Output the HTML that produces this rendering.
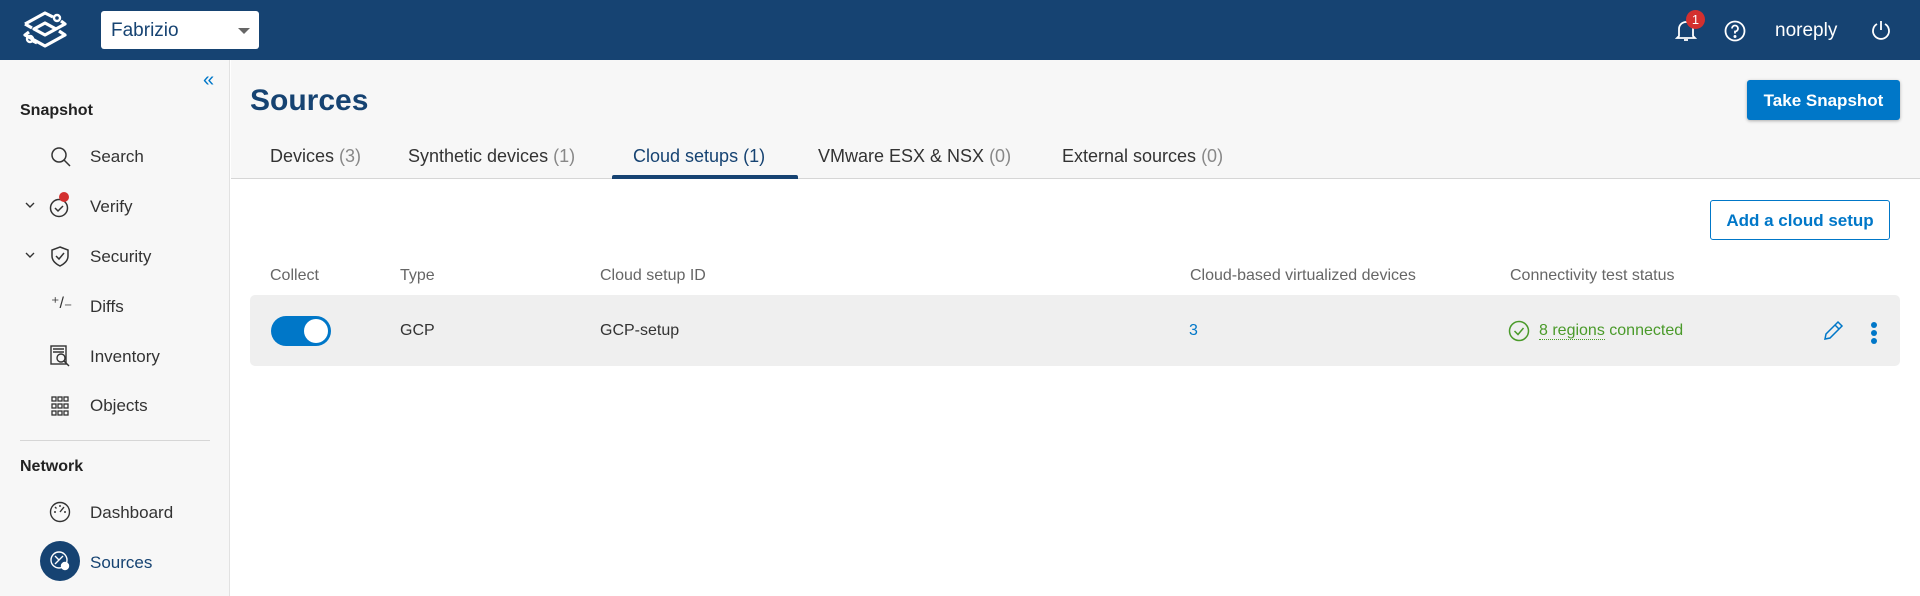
<!DOCTYPE html>
<html><head><meta charset="utf-8"><style>
*{box-sizing:border-box;margin:0;padding:0}
body{width:1920px;height:596px;overflow:hidden;font-family:"Liberation Sans",Arial,sans-serif;background:#fff;position:relative;color:#222}
.a{position:absolute;white-space:nowrap}
.hdr{left:0;top:0;width:1920px;height:60px;background:#164372}
.side{left:0;top:60px;width:230px;height:536px;background:#f7f7f7;border-right:1px solid #e2e2e2}
.top{left:231px;top:60px;width:1689px;height:119px;background:#f7f7f7;border-bottom:1px solid #d6d6d6}
.nav{font-size:17px;color:#333;left:90px}
.sec{font-size:16px;font-weight:bold;color:#222;left:20px}
.tab{font-size:18px;color:#333;top:146px}
.tab span{color:#888}
.th{font-size:16px;color:#666;top:267px}
.td{font-size:16px;color:#333;top:322px}
</style></head><body>
<div class="a hdr"></div>
<svg class="a" style="left:20px;top:10px" width="50" height="40" viewBox="0 0 50 40" fill="none" stroke="#fff" stroke-width="3.2" stroke-linejoin="round">
<path d="M5 14 L25 3 L33 7"/><path d="M41 11 L45 14 L25 25 L14 19 L25 13 L36 19"/>
<path d="M5 14 L12 18"/>
<path d="M9 22 L5 25 L25 36 L45 25 L39 21"/><path d="M17 33 L11 30"/>
<circle cx="37" cy="8" r="3" stroke-width="2.4"/><circle cx="10" cy="29" r="3" stroke-width="2.4"/></svg>
<div class="a" style="left:101px;top:11px;width:158px;height:38px;background:#fff;border-radius:3px"></div>
<div class="a" style="left:111px;top:20px;font-size:19px;color:#164372">Fabrizio</div>
<div class="a" style="left:238px;top:28px;width:0;height:0;border-left:6px solid transparent;border-right:6px solid transparent;border-top:6px solid #666"></div>
<!-- header right -->
<svg class="a" style="left:1675px;top:19px" width="22" height="24" viewBox="0 0 22 24" fill="none" stroke="#fff" stroke-width="1.8"><path d="M4 17 V10 A7 7 0 0 1 18 10 V17 L20 19 H2 Z"/><path d="M9 21 H13"/></svg>
<div class="a" style="left:1686px;top:10px;width:19px;height:19px;border-radius:50%;background:#d3302f;color:#fff;font-size:13px;text-align:center;line-height:19px">1</div>
<svg class="a" style="left:1724px;top:20px" width="22" height="22" viewBox="0 0 22 22" fill="none" stroke="#fff" stroke-width="1.8"><circle cx="11" cy="11" r="9.5"/><path d="M8 8.5 A3 3 0 1 1 11 11.5 V13.5"/><circle cx="11" cy="16.5" r=".6" fill="#fff"/></svg>
<div class="a" style="left:1775px;top:20px;font-size:19px;color:#fff">noreply</div>
<svg class="a" style="left:1870px;top:19px" width="22" height="22" viewBox="0 0 22 22" fill="none" stroke="#fff" stroke-width="1.8"><path d="M7 5 A8 8 0 1 0 15 5"/><path d="M11 2 V11"/></svg>
<!-- sidebar -->
<div class="a side"></div>
<div class="a" style="left:203px;top:69px;font-size:20px;color:#0077c8">«</div>
<div class="a sec" style="top:102px">Snapshot</div>
<svg class="a" style="left:50px;top:146px" width="22" height="22" viewBox="0 0 22 22" fill="none" stroke="#333" stroke-width="1.5"><circle cx="9" cy="9" r="7"/><path d="M14 14 L20 20"/></svg>
<div class="a nav" style="top:147px">Search</div>
<svg class="a" style="left:25px;top:202px" width="10" height="6" viewBox="0 0 10 6" fill="none" stroke="#333" stroke-width="1.4"><path d="M1 1 L5 5 L9 1"/></svg>
<svg class="a" style="left:49px;top:196px" width="24" height="22" viewBox="0 0 24 22" fill="none" stroke="#333" stroke-width="1.5"><circle cx="10" cy="12" r="8.5"/><path d="M6 12 L9 15 L14 10"/></svg>
<div class="a" style="left:59px;top:192px;width:10px;height:10px;border-radius:50%;background:#d3302f"></div>
<div class="a nav" style="top:197px">Verify</div>
<svg class="a" style="left:25px;top:252px" width="10" height="6" viewBox="0 0 10 6" fill="none" stroke="#333" stroke-width="1.4"><path d="M1 1 L5 5 L9 1"/></svg>
<svg class="a" style="left:50px;top:245px" width="20" height="22" viewBox="0 0 20 22" fill="none" stroke="#333" stroke-width="1.5"><path d="M10 2 L18 5 V11 C18 16 14 19 10 21 C6 19 2 16 2 11 V5 Z"/><path d="M6 11 L9 14 L14 8"/></svg>
<div class="a nav" style="top:247px">Security</div>
<div class="a" style="left:51px;top:293px;font-size:16px;color:#333">⁺/₋</div>
<div class="a nav" style="top:297px">Diffs</div>
<svg class="a" style="left:50px;top:345px" width="22" height="22" viewBox="0 0 22 22" fill="none" stroke="#333" stroke-width="1.4"><rect x="1" y="1" width="15" height="18"/><path d="M3 4 H14 M3 7 H14"/><circle cx="11" cy="13" r="4"/><path d="M14 16 L19 21"/></svg>
<div class="a nav" style="top:347px">Inventory</div>
<svg class="a" style="left:51px;top:396px" width="18" height="20" viewBox="0 0 18 20" fill="none" stroke="#333" stroke-width="1.3"><g><rect x="1" y="1" width="4" height="4"/><rect x="7" y="1" width="4" height="4"/><rect x="13" y="1" width="4" height="4"/><rect x="1" y="8" width="4" height="4"/><rect x="7" y="8" width="4" height="4"/><rect x="13" y="8" width="4" height="4"/><rect x="1" y="15" width="4" height="4"/><rect x="7" y="15" width="4" height="4"/><rect x="13" y="15" width="4" height="4"/></g></svg>
<div class="a nav" style="top:396px">Objects</div>
<div class="a" style="left:20px;top:440px;width:190px;height:1px;background:#d6d6d6"></div>
<div class="a sec" style="top:458px">Network</div>
<svg class="a" style="left:49px;top:501px" width="22" height="22" viewBox="0 0 22 22" fill="none" stroke="#333" stroke-width="1.4"><circle cx="11" cy="11" r="9.5"/><path d="M11 11 L15 6"/><path d="M5 11 H7 M15 11 H17 M11 4 V6 M6 6 L7.5 7.5"/></svg>
<div class="a nav" style="top:503px">Dashboard</div>
<div class="a" style="left:40px;top:541px;width:40px;height:40px;border-radius:50%;background:#164372"></div>
<svg class="a" style="left:49px;top:550px" width="22" height="22" viewBox="0 0 22 22" fill="none" stroke="#fff" stroke-width="1.4"><circle cx="10" cy="10" r="8"/><path d="M6 6 L10 10 L14 6 M6 14 L10 10"/><circle cx="16" cy="16" r="3.5" fill="#fff"/></svg>
<div class="a nav" style="top:553px;color:#164372">Sources</div>
<!-- top area -->
<div class="a top"></div>
<div class="a" style="left:250px;top:84px;font-size:30px;font-weight:bold;color:#164372">Sources</div>
<div class="a" style="left:1747px;top:80px;width:153px;height:40px;background:#0077c8;border-radius:3px;box-shadow:0 1px 3px rgba(0,0,0,.3);color:#fff;font-size:17px;font-weight:bold;text-align:center;line-height:41px">Take Snapshot</div>
<div class="a tab" style="left:270px">Devices <span>(3)</span></div>
<div class="a tab" style="left:408px">Synthetic devices <span>(1)</span></div>
<div class="a tab" style="left:633px;color:#164372">Cloud setups <span style="color:#164372">(1)</span></div>
<div class="a tab" style="left:818px">VMware ESX &amp; NSX <span>(0)</span></div>
<div class="a tab" style="left:1062px">External sources <span>(0)</span></div>
<div class="a" style="left:612px;top:175px;width:186px;height:4px;background:#164372;border-radius:2px 2px 0 0"></div>
<!-- content -->
<div class="a" style="left:1710px;top:200px;width:180px;height:40px;border:1.5px solid #0077c8;border-radius:3px;color:#0077c8;font-size:17px;font-weight:bold;text-align:center;line-height:39px">Add a cloud setup</div>
<div class="a th" style="left:270px">Collect</div>
<div class="a th" style="left:400px">Type</div>
<div class="a th" style="left:600px">Cloud setup ID</div>
<div class="a th" style="left:1190px">Cloud-based virtualized devices</div>
<div class="a th" style="left:1510px">Connectivity test status</div>
<div class="a" style="left:250px;top:295px;width:1650px;height:71px;background:#efefef;border-radius:5px"></div>
<div class="a" style="left:271px;top:316px;width:60px;height:30px;border-radius:15px;background:#0077c8"></div>
<div class="a" style="left:304px;top:319px;width:24px;height:24px;border-radius:50%;background:#fff"></div>
<div class="a td" style="left:400px">GCP</div>
<div class="a td" style="left:600px">GCP-setup</div>
<div class="a td" style="left:1189px;color:#0077c8">3</div>
<svg class="a" style="left:1508px;top:320px" width="22" height="22" viewBox="0 0 22 22" fill="none" stroke="#4a9a2a" stroke-width="1.5"><circle cx="11" cy="11" r="9.5"/><path d="M6.5 11 L10 14.5 L15.5 8"/></svg>
<div class="a td" style="left:1539px;color:#4a9a2a"><span style="border-bottom:1.5px dotted #4a9a2a">8 regions</span> connected</div>
<svg class="a" style="left:1822px;top:320px" width="22" height="22" viewBox="0 0 22 22" fill="none" stroke="#0077c8" stroke-width="1.5"><path d="M3 19 L4 14 L16 2 L20 6 L8 18 Z M13 5 L17 9"/></svg>
<div class="a" style="left:1871px;top:322px;width:6px;height:6px;border-radius:50%;background:#0077c8"></div>
<div class="a" style="left:1871px;top:330px;width:6px;height:6px;border-radius:50%;background:#0077c8"></div>
<div class="a" style="left:1871px;top:338px;width:6px;height:6px;border-radius:50%;background:#0077c8"></div>
</body></html>
